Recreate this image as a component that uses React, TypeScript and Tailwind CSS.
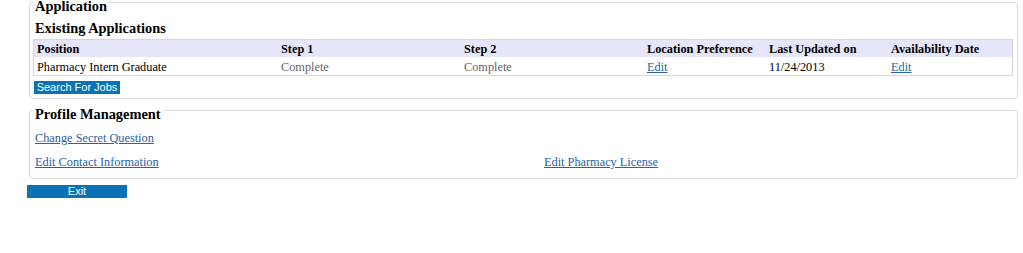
const serif = 'font-["Liberation_Serif","Times_New_Roman",serif]';

const columns = ['Position', 'Step 1', 'Step 2', 'Location Preference', 'Last Updated on', 'Availability Date'];

function EditLink({ children }: { children: React.ReactNode }) {
  return (
    <a href="#" className="text-[#2a62a6] underline underline-offset-[1px]">
      {children}
    </a>
  );
}

function BlueButton({ label, className }: { label: string; className?: string }) {
  return (
    <button
      type="button"
      className={`h-[13px] bg-[#0b72b5] text-white text-[11px] leading-[13px] font-["Liberation_Sans",Arial,sans-serif] ${className ?? ''}`}
    >
      {label}
    </button>
  );
}

export default function App() {
  return (
    <div className={`min-h-screen bg-white text-black ${serif}`}>
      <div className="-mt-[9px] pl-[27px]">
        {/* Application */}
        <fieldset className="mx-[2px] w-[989px] rounded-[4px] border border-[#dcdcdc] pl-[3px] pr-[4px] pb-[4px] pt-0">
          <legend className="px-[2px] pt-[7px] text-[14.4px] leading-[16px] font-bold">Application</legend>
          <h3 className="mt-[6px] ml-[2px] text-[14.4px] leading-[16px] font-bold">Existing Applications</h3>

          <div className="mt-[3px] border border-[#d6d6e0] text-[12.3px] leading-[14px]">
            <div className="grid h-[17px] grid-cols-[244px_183px_183px_122px_122px_1fr] items-center bg-[#e6e6fa] font-bold">
              {columns.map((c) => (
                <div key={c} className="pl-[3px] whitespace-nowrap">
                  {c}
                </div>
              ))}
            </div>
            <div className="grid h-[18px] grid-cols-[244px_183px_183px_122px_122px_1fr] items-center pt-[1px]">
              <div className="pl-[3px]">Pharmacy Intern Graduate</div>
              <div className="pl-[3px] text-[#666666]">Complete</div>
              <div className="pl-[3px] text-[#666666]">Complete</div>
              <div className="pl-[3px]">
                <EditLink>Edit</EditLink>
              </div>
              <div className="pl-[3px]">11/24/2013</div>
              <div className="pl-[3px]">
                <EditLink>Edit</EditLink>
              </div>
            </div>
          </div>

          <BlueButton label="Search For Jobs" className="mt-[5px] ml-[1px] block w-[86px]" />
        </fieldset>

        {/* Profile Management */}
        <fieldset className="mx-[2px] w-[989px] rounded-[4px] border border-[#dcdcdc] pl-[3px] pr-[4px] pb-[4px] pt-0">
          <legend className="px-[2px] pt-[7px] text-[14.4px] leading-[16px] font-bold">Profile Management</legend>
          <div className="mt-[4px] grid grid-cols-[511px_1fr] text-[12.3px] leading-[14px]">
            <div className="flex h-[24px] items-center pl-[2px]">
              <EditLink>Change Secret Question</EditLink>
            </div>
            <div className="h-[24px]" />
            <div className="flex h-[24px] items-center pl-[2px]">
              <EditLink>Edit Contact Information</EditLink>
            </div>
            <div className="flex h-[24px] items-center">
              <EditLink>Edit Pharmacy License</EditLink>
            </div>
          </div>
        </fieldset>

        <BlueButton label="Exit" className="mt-[6px] block w-[100px]" />
      </div>
    </div>
  );
}
